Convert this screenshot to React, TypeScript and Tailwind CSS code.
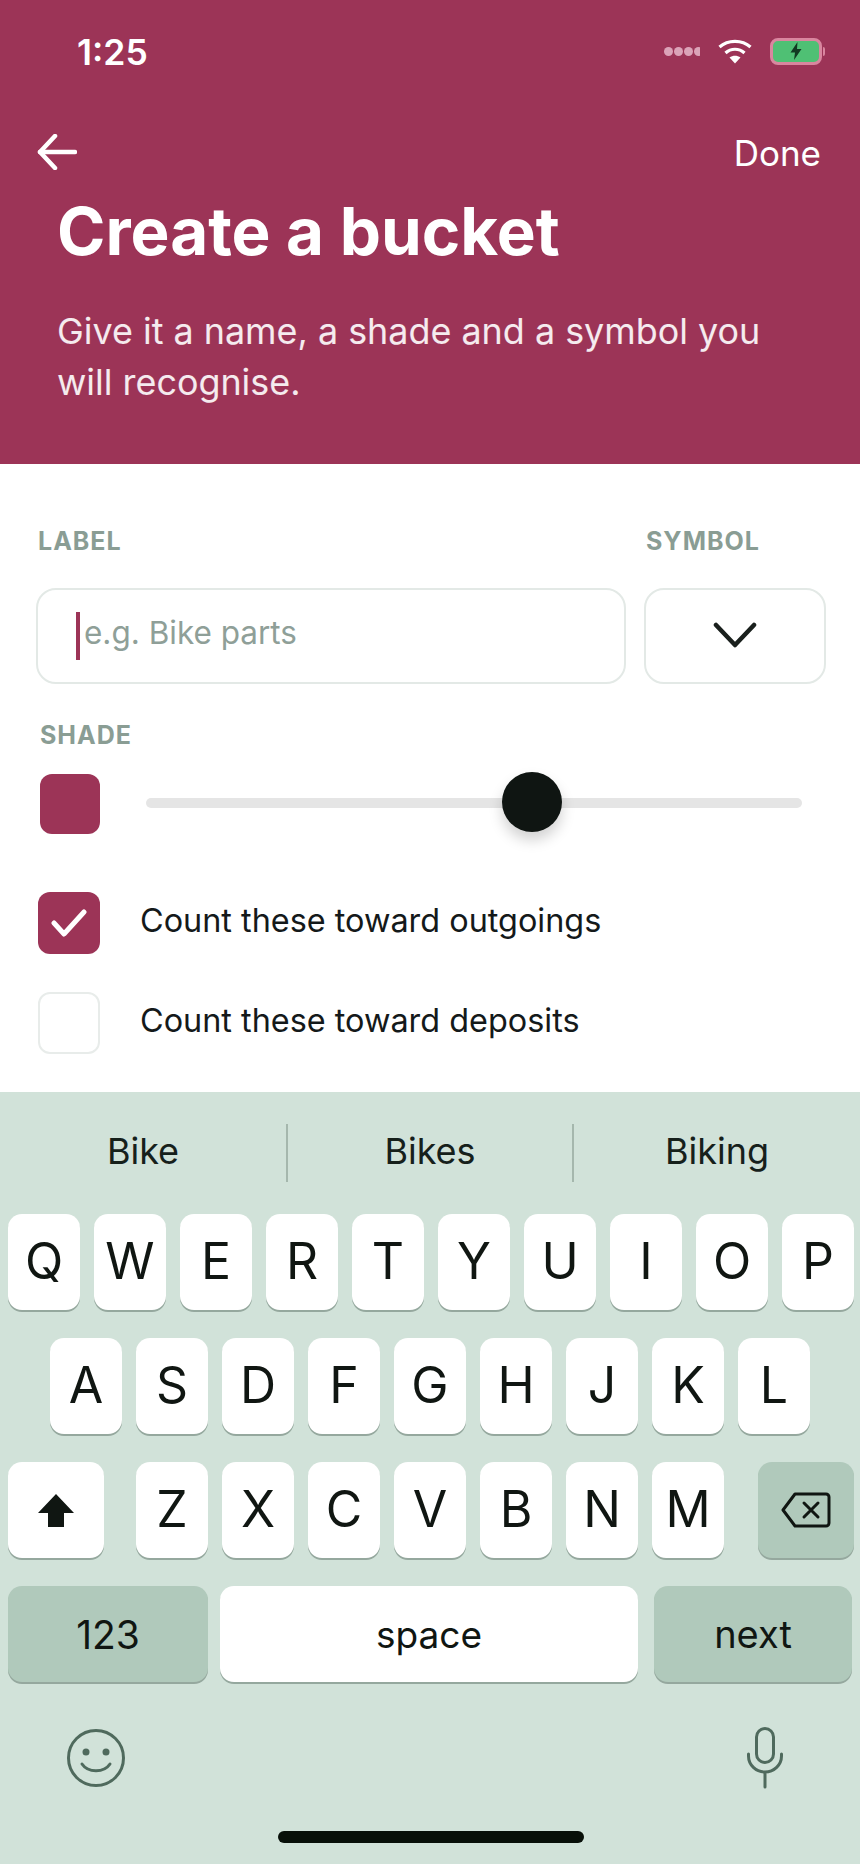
import React from "react";

const font = { fontFamily: "Inter, 'Noto Sans', sans-serif" };

function Key({ label, w = "w-[72px]", children, muted = false, size = "text-[50px]", up = "-translate-y-[1px]" }: { label?: string; w?: string; children?: React.ReactNode; muted?: boolean; size?: string; up?: string }) {
  return (
    <div className={`${w} h-[96px] shrink-0 rounded-[14px] flex items-center justify-center shadow-[0_2px_0_#95a89e] text-[#101612] ${muted ? "bg-[#b0c9bb]" : "bg-white"}`}>
      {label ? <span className={`${size} leading-none ${up}`}>{label}</span> : children}
    </div>
  );
}

const LetterKey = ({ l }: { l: string }) => <Key label={l} />;

export default function App() {
  return (
    <div style={font} className="w-[860px] h-[1864px] flex flex-col bg-white overflow-hidden">
      <header className="h-[464px] shrink-0 bg-[#9c3457] text-white flex flex-col">
        <div className="h-[102px] flex items-center justify-between pl-[77px] pr-[38px]">
          <span className="text-[35.5px] font-semibold leading-none translate-y-[2px]">1:25</span>
          <div className="flex items-center">
            <div className="flex mr-[18px] w-[36px] overflow-hidden">
              <i className="w-[9px] h-[9px] shrink-0 rounded-full bg-[#dba3b8]" />
              <i className="w-[9px] h-[9px] shrink-0 rounded-full bg-[#dba3b8] ml-[1px]" />
              <i className="w-[9px] h-[9px] shrink-0 rounded-full bg-[#dba3b8] ml-[1px]" />
              <i className="w-[9px] h-[9px] shrink-0 rounded-full bg-[#dba3b8] ml-[1px]" />
            </div>
            <svg width="34" height="25" viewBox="0 0 34 25" fill="none" className="mr-[18px]">
              <path d="M1.5 8 C10 0.5 24 0.5 32.5 8" stroke="white" strokeWidth="3.2" />
              <path d="M7.5 14 C13 9 21 9 26.5 14" stroke="white" strokeWidth="3.2" />
              <path d="M17 24.5 L11.5 18.5 C15 16 19 16 22.5 18.5 Z" fill="white" />
            </svg>
            <div className="relative w-[52px] h-[27px] rounded-[8px] border-[3px] border-[#d9869f] bg-[#4fc074] flex items-center justify-center">
              <svg width="12" height="18" viewBox="0 0 12 18"><path d="M7.5 0 L0.5 10.5 H5 L4 18 L11.5 7 H7 Z" fill="#123a22" /></svg>
              <i className="absolute -right-[6px] top-[6px] w-[2px] h-[9px] rounded-r bg-[#d9869f]" />
            </div>
          </div>
        </div>
        <div className="h-[96px] flex items-center justify-between pl-[37px] pr-[39px]">
          <svg width="40" height="36" viewBox="0 0 40 36" fill="none" stroke="white" strokeWidth="4.5" strokeLinecap="round" strokeLinejoin="round" className="translate-y-[2px]">
            <path d="M38 18 H3" />
            <path d="M18 2 L3 18 L18 34" />
          </svg>
          <span className="text-[35px] leading-none translate-y-[3px]">Done</span>
        </div>
        <h1 className="pl-[57px] text-[65.5px] font-bold leading-[70px] -translate-y-[1px]">Create a bucket</h1>
        <p className="pl-[57px] mt-[38px] w-[790px] text-[35.9px] leading-[51px] text-white/90">Give it a name, a shade and a symbol you will recognise.</p>
      </header>

      <main className="h-[628px] shrink-0 flex flex-col">
        <div className="mt-[63px] flex h-[30px] items-center text-[25px] font-bold tracking-[1px] text-[#8a9d94]">
          <span className="pl-[38px] w-[646px]">LABEL</span>
          <span>SYMBOL</span>
        </div>
        <div className="mt-[31px] pl-[36px] flex gap-[18px]">
          <div className="w-[590px] h-[96px] rounded-[20px] border-2 border-[#e3e9e6] flex items-center pl-[38px]">
            <i className="w-[4px] h-[48px] bg-[#9c3457]" />
            <span className="ml-[4px] text-[31.5px] text-[#8f9f98] leading-none -translate-y-[3px]">e.g. Bike parts</span>
          </div>
          <div className="w-[182px] h-[96px] rounded-[20px] border-2 border-[#e3e9e6] flex items-center justify-center">
            <svg width="44" height="26" viewBox="0 0 44 26" fill="none" stroke="#1a201d" strokeWidth="4.5" strokeLinecap="round" strokeLinejoin="round" className="-translate-y-[1px]">
              <path d="M3 3 L22 23 L41 3" />
            </svg>
          </div>
        </div>
        <div className="mt-[37px] pl-[40px] h-[30px] flex items-center text-[25px] font-bold tracking-[1px] text-[#8a9d94]">SHADE</div>
        <div className="mt-[23px] pl-[40px] h-[60px] flex items-center gap-[46px]">
          <div className="w-[60px] h-[60px] rounded-[12px] bg-[#9c3457]" />
          <div className="relative w-[656px] h-[10px] mb-[2px] rounded-full bg-[#e5e5e5]">
            <div className="absolute left-[356px] -top-[26px] w-[60px] h-[60px] rounded-full bg-[#0f1512] shadow-[0_8px_14px_rgba(0,0,0,0.18)]" />
          </div>
        </div>
        <div className="mt-[58px] pl-[38px] flex items-center gap-[40px] h-[62px]">
          <div className="w-[62px] h-[62px] rounded-[12px] bg-[#9c3457] flex items-center justify-center">
            <svg width="36" height="28" viewBox="0 0 36 28" fill="none" stroke="white" strokeWidth="5" strokeLinecap="round" strokeLinejoin="round">
              <path d="M3 14 L13 25 L33 3" />
            </svg>
          </div>
          <span className="text-[32.4px] text-[#14191a] leading-none -translate-y-[2px]">Count these toward outgoings</span>
        </div>
        <div className="mt-[38px] pl-[38px] flex items-center gap-[40px] h-[62px]">
          <div className="w-[62px] h-[62px] rounded-[12px] border-2 border-[#e8ecea]" />
          <span className="text-[32.4px] text-[#14191a] leading-none -translate-y-[2px]">Count these toward deposits</span>
        </div>
      </main>

      <section className="flex-1 bg-[#d1e2d9] flex flex-col items-stretch">
        <div className="mt-[32px] h-[58px] flex items-center text-[36px] text-[#16201b]">
          <span className="w-[286px] text-center -translate-y-[2px]">Bike</span>
          <i className="w-[2px] h-[58px] bg-[#a5b7ad]" />
          <span className="w-[284px] text-center -translate-y-[2px]">Bikes</span>
          <i className="w-[2px] h-[58px] bg-[#a5b7ad]" />
          <span className="flex-1 text-center -translate-y-[2px]">Biking</span>
        </div>
        <div className="mt-[32px] pl-[8px] flex gap-[14px]">
          {"QWERTYUIOP".split("").map((l) => <LetterKey key={l} l={l} />)}
        </div>
        <div className="mt-[28px] pl-[50px] flex gap-[14px]">
          {"ASDFGHJKL".split("").map((l) => <LetterKey key={l} l={l} />)}
        </div>
        <div className="mt-[28px] pl-[8px] flex gap-[14px]">
          <Key w="w-[96px] mr-[18px]">
            <svg width="36" height="33" viewBox="0 0 36 33"><path d="M18 0 L36 19 H26 V33 H10 V19 H0 Z" fill="#101612" /></svg>
          </Key>
          {"ZXCVBNM".split("").map((l) => <LetterKey key={l} l={l} />)}
          <Key w="w-[96px] ml-[20px]" muted>
            <svg width="50" height="36" viewBox="0 0 50 36" fill="none" stroke="#101612" strokeWidth="3" strokeLinejoin="round" strokeLinecap="round">
              <path d="M14 2 H45 A3 3 0 0 1 48 5 V31 A3 3 0 0 1 45 34 H14 L2 18 Z" />
              <path d="M23 11 L37 25 M37 11 L23 25" />
            </svg>
          </Key>
        </div>
        <div className="mt-[28px] pl-[8px] flex">
          <Key w="w-[200px]" muted label="123" size="text-[39px]" up="translate-y-0" />
          <Key w="w-[418px] ml-[12px]" label="space" size="text-[37px]" up="translate-y-0" />
          <Key w="w-[198px] ml-[16px]" muted label="next" size="text-[38px]" up="translate-y-0" />
        </div>
        <div className="mt-[45px] pl-[67px] pr-[77px] flex items-center justify-between h-[62px]">
          <svg width="58" height="58" viewBox="0 0 58 58" fill="none" stroke="#4f6a5d" strokeWidth="3">
            <circle cx="29" cy="29" r="27.5" />
            <circle cx="19" cy="23" r="3.5" fill="#4f6a5d" stroke="none" />
            <circle cx="39" cy="23" r="3.5" fill="#4f6a5d" stroke="none" />
            <path d="M15 35 C21 44 37 44 43 35" strokeLinecap="round" />
          </svg>
          <svg width="36" height="62" viewBox="0 0 36 62" fill="none" stroke="#4f6a5d" strokeWidth="3" strokeLinecap="round">
            <rect x="9.5" y="1.5" width="17" height="34" rx="8.5" />
            <path d="M1.5 27 V29 C1.5 38 9 45 18 45 C27 45 34.5 38 34.5 29 V27 M18 45 V60" />
          </svg>
        </div>
        <div className="mt-[42px] flex justify-center pl-[2px]">
          <i className="w-[306px] h-[12px] rounded-full bg-[#081009]" />
        </div>
      </section>
    </div>
  );
}
